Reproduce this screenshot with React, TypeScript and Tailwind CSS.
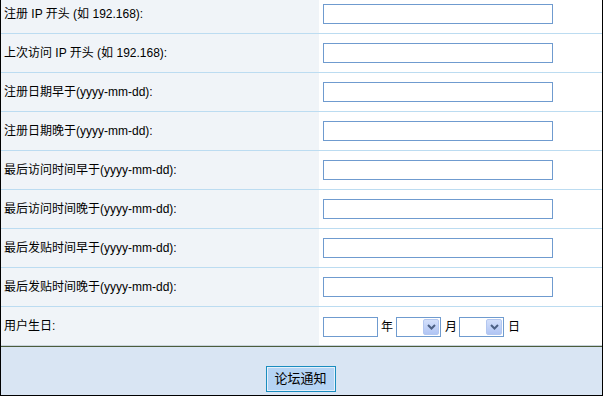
const font = "font-['Liberation_Sans','Noto_Sans_CJK_SC',sans-serif]";

const rows = [
  "注册 IP 开头 (如 192.168):",
  "上次访问 IP 开头 (如 192.168):",
  "注册日期早于(yyyy-mm-dd):",
  "注册日期晚于(yyyy-mm-dd):",
  "最后访问时间早于(yyyy-mm-dd):",
  "最后访问时间晚于(yyyy-mm-dd):",
  "最后发贴时间早于(yyyy-mm-dd):",
  "最后发贴时间晚于(yyyy-mm-dd):",
];

function FakeSelect({ className = "" }: { className?: string }) {
  return (
    <div className={`flex h-[20px] w-[45px] items-center justify-end border border-[#6f9bcf] bg-white p-px ${className}`}>
      <div className="flex h-[16px] w-[16px] items-center justify-center rounded-[2px] border border-[#b3c7f0] bg-gradient-to-b from-[#d4e0fb] to-[#b1c5f4]">
        <svg width="9" height="6" viewBox="0 0 9 6">
          <path d="M1 1 L4.5 4.5 L8 1" stroke="#4d6185" strokeWidth="2" fill="none" />
        </svg>
      </div>
    </div>
  );
}

export default function App() {
  return (
    <div className={`${font} h-[396px] w-[603px] overflow-hidden bg-white text-[12px] text-black`}>
      <div className="flex h-[396px] flex-col border-x border-b border-black">
        <div className="mt-[-5px]">
          {rows.map((label) => (
            <div key={label} className="flex h-[39px] border-b border-[#bcdcf1]">
              <div className="flex w-[318px] items-center bg-[#f0f4f8] pl-[3px]">{label}</div>
              <div className="flex flex-1 items-center pl-[4px]">
                <input className="h-[20px] w-[230px] border border-[#6f9bcf] bg-white px-1 outline-none" />
              </div>
            </div>
          ))}
          <div className="flex h-[39px] border-b border-[#c9d3dc]">
            <div className="flex w-[318px] items-center bg-[#f0f4f8] pl-[3px]">用户生日:</div>
            <div className="flex flex-1 items-center pl-[4px] pt-px">
              <input className="h-[20px] w-[55px] border border-[#6f9bcf] bg-white outline-none" />
              <span className="ml-[3px]">年</span>
              <FakeSelect className="ml-[3px]" />
              <span className="ml-[4px]">月</span>
              <FakeSelect className="ml-[2px]" />
              <span className="ml-[4px]">日</span>
            </div>
          </div>
        </div>
        <div className="flex flex-1 justify-center border-t border-[#4b5d3b] bg-[#d9e5f3] pt-[19px]">
          <button className="ml-[-2px] h-[26px] w-[70px] border border-[#1a8dbf] bg-[#b5d4f4] text-[13px] shadow-[inset_0_0_0_1px_#e6f1fb]">
            论坛通知
          </button>
        </div>
      </div>
    </div>
  );
}
